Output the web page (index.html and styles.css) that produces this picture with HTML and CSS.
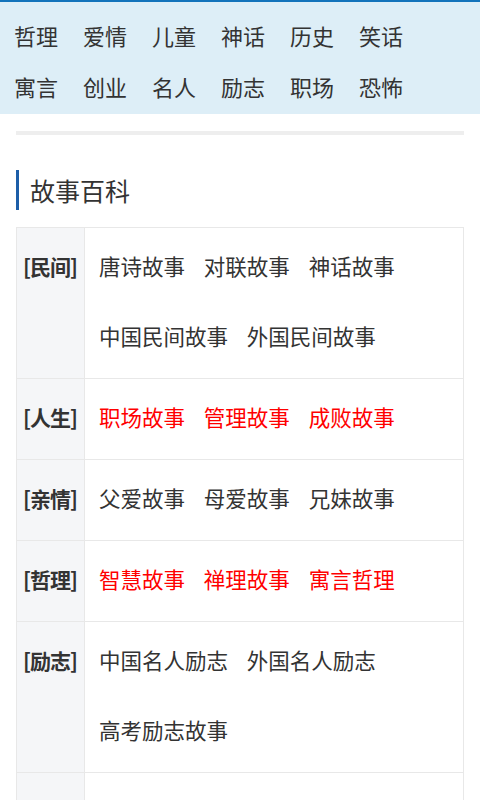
FILE: index.html
```html
<!DOCTYPE html>
<html lang="zh-CN">
<head>
    <meta charset="UTF-8">
    <meta name="viewport" content="width=device-width, initial-scale=1.0">
    <title>故事百科</title>
    <link rel="stylesheet" href="styles.css">
</head>
<body>
    <div class="nav">
        <a href="#">哲理</a>
        <a href="#">爱情</a>
        <a href="#">儿童</a>
        <a href="#">神话</a>
        <a href="#">历史</a>
        <a href="#">笑话</a>
        <a href="#">寓言</a>
        <a href="#">创业</a>
        <a href="#">名人</a>
        <a href="#">励志</a>
        <a href="#">职场</a>
        <a href="#">恐怖</a>
    </div>

    <div class="divider"></div>

    <h2 class="section-title">故事百科</h2>

    <table class="wiki">
        <tr>
            <th>[民间]</th>
            <td>
                <a href="#">唐诗故事</a>
                <a href="#">对联故事</a>
                <a href="#">神话故事</a>
                <a href="#">中国民间故事</a>
                <a href="#">外国民间故事</a>
            </td>
        </tr>
        <tr>
            <th>[人生]</th>
            <td class="hot">
                <a href="#">职场故事</a>
                <a href="#">管理故事</a>
                <a href="#">成败故事</a>
            </td>
        </tr>
        <tr>
            <th>[亲情]</th>
            <td>
                <a href="#">父爱故事</a>
                <a href="#">母爱故事</a>
                <a href="#">兄妹故事</a>
            </td>
        </tr>
        <tr>
            <th>[哲理]</th>
            <td class="hot">
                <a href="#">智慧故事</a>
                <a href="#">禅理故事</a>
                <a href="#">寓言哲理</a>
            </td>
        </tr>
        <tr>
            <th>[励志]</th>
            <td>
                <a href="#">中国名人励志</a>
                <a href="#">外国名人励志</a>
                <a href="#">高考励志故事</a>
            </td>
        </tr>
        <tr>
            <th>[其他]</th>
            <td>
                <a href="#">成语故事</a>
                <a href="#">经典故事</a>
            </td>
        </tr>
    </table>
</body>
</html>
```

FILE: styles.css
```css
body {
    margin: 0;
    font-family: "Noto Sans CJK SC", "Noto Sans", sans-serif;
    color: #333;
    background-color: #fff;
}

a {
    color: inherit;
    text-decoration: none;
}

.nav {
    display: grid;
    grid-template-columns: repeat(6, 69px);
    padding: 8px 0 2px 14px;
    border-top: 2px solid #1273bb;
    background-color: #ddeef7;
    font-size: 22px;
    line-height: 51px;
}

.divider {
    height: 4px;
    margin: 17px 16px 0;
    background-color: #eee;
}

.section-title {
    margin: 35px 16px 17px;
    padding-left: 11px;
    border-left: 3px solid #1d5ea8;
    font-size: 25px;
    font-weight: normal;
    line-height: 40px;
}

.wiki {
    width: 448px;
    margin: 0 16px;
    border-collapse: collapse;
    border: 1px solid #e8e8e8;
    font-size: 21.5px;
    line-height: 70px;
}

.wiki tr {
    border-top: 1px solid #e8e8e8;
}

.wiki th {
    width: 61px;
    padding: 3px 0 7px 6px;
    vertical-align: top;
    text-align: left;
    white-space: nowrap;
    font-size: 21px;
    letter-spacing: -1px;
    background-color: #f5f6f8;
    border-right: 1px solid #e8e8e8;
}

.wiki td {
    padding: 3px 0 7px 14px;
    vertical-align: top;
}

.wiki td a {
    display: inline-block;
    margin-right: 14px;
}

.wiki td.hot a {
    color: #ff0000;
}
```
